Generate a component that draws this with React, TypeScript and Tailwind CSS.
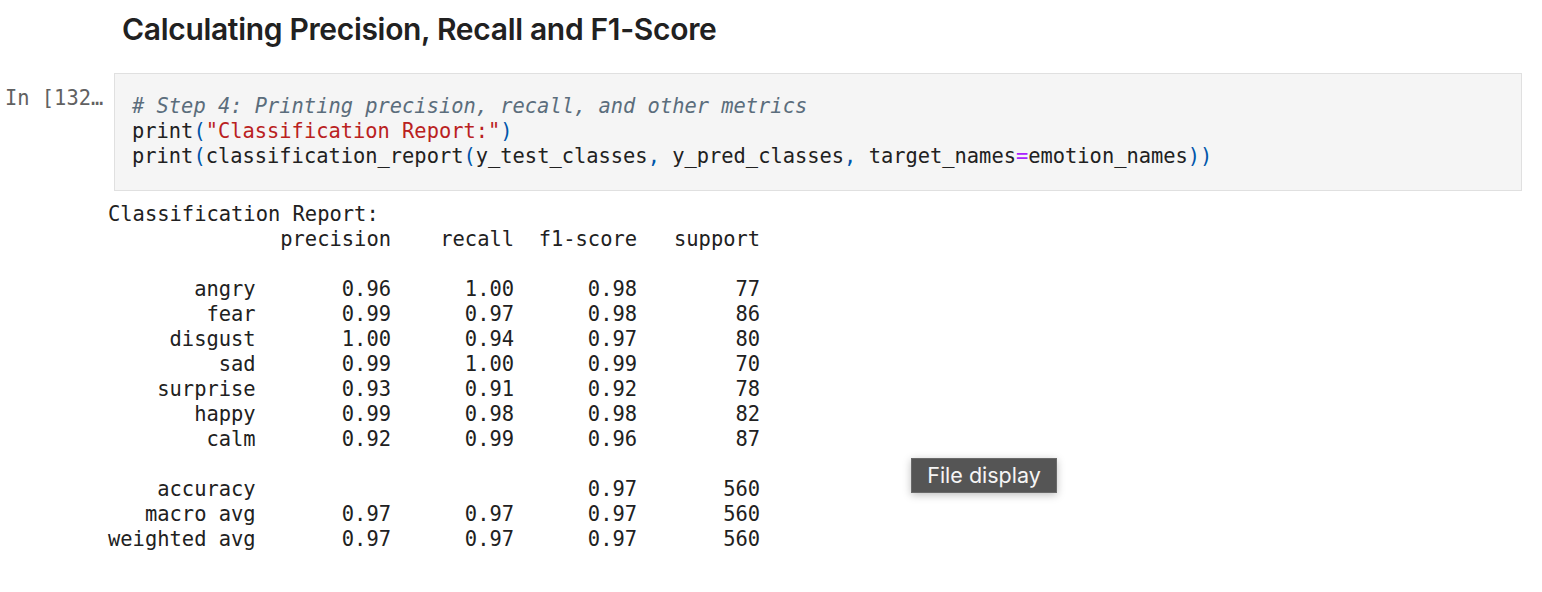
const mono = { fontFamily: '"DejaVu Sans Mono", "Liberation Mono", monospace' };

const rows = [
  ["angry", "0.96", "1.00", "0.98", "77"],
  ["fear", "0.99", "0.97", "0.98", "86"],
  ["disgust", "1.00", "0.94", "0.97", "80"],
  ["sad", "0.99", "1.00", "0.99", "70"],
  ["surprise", "0.93", "0.91", "0.92", "78"],
  ["happy", "0.99", "0.98", "0.98", "82"],
  ["calm", "0.92", "0.99", "0.96", "87"],
];

const avgRows = [
  ["macro avg", "0.97", "0.97", "0.97", "560"],
  ["weighted avg", "0.97", "0.97", "0.97", "560"],
];

const line = (r: string[]) =>
  r[0].padStart(12) + " " + r.slice(1).map((c) => " " + c.padStart(9)).join("");

const report = [
  "Classification Report:",
  " ".repeat(13) + [" precision", "    recall", "  f1-score", "   support"].join(""),
  "",
  ...rows.map(line),
  "",
  line(["accuracy", "", "", "0.97", "560"]),
  ...avgRows.map(line),
].join("\n");

export default function App() {
  return (
    <div className="relative w-[1542px] h-[592px] bg-white overflow-hidden text-[#212121]">
      <h2
        className="pl-[122px] pt-[12px] h-[73px] text-[30px] font-semibold tracking-[-0.32px] leading-[34px]"
        style={{ fontFamily: "Inter, 'Liberation Sans', sans-serif" }}
      >
        Calculating Precision, Recall and F1-Score
      </h2>

      <div className="flex items-start" style={mono}>
        <div className="w-[114px] shrink-0 pl-[5px] pt-[13px] text-[20.4px] leading-[25px] text-[#616161] whitespace-pre">
          In [132…
        </div>
        <div className="w-[1408px] h-[118px] bg-[#f5f5f5] border border-[#e0e0e0] pl-[17px] pt-[20px] text-[20.4px] leading-[25px] whitespace-pre">
          <div className="italic text-[#5b6d7c]">
            # Step 4: Printing precision, recall, and other metrics
          </div>
          <div>
            print<span className="text-[#0055aa]">(</span>
            <span className="text-[#ba2121]">"Classification Report:"</span>
            <span className="text-[#0055aa]">)</span>
          </div>
          <div>
            print<span className="text-[#0055aa]">(</span>classification_report
            <span className="text-[#0055aa]">(</span>y_test_classes
            <span className="text-[#0055aa]">,</span> y_pred_classes
            <span className="text-[#0055aa]">,</span> target_names
            <span className="text-[#aa22ff]">=</span>emotion_names
            <span className="text-[#0055aa]">))</span>
          </div>
        </div>
      </div>

      <pre
        className="pl-[108px] pt-[11px] text-[20.45px] leading-[25px] text-[#212121]"
        style={mono}
      >
        {report}
      </pre>

      <div
        className="absolute left-[911px] top-[458px] w-[146px] h-[35px] flex items-center justify-center bg-[#555555] border border-[#6a6a6a] text-[#f5f5f5] text-[21.5px] shadow-[0_2px_8px_rgba(0,0,0,0.25)]"
        style={{ fontFamily: "Inter, 'Liberation Sans', sans-serif" }}
      >
        File display
      </div>
    </div>
  );
}
